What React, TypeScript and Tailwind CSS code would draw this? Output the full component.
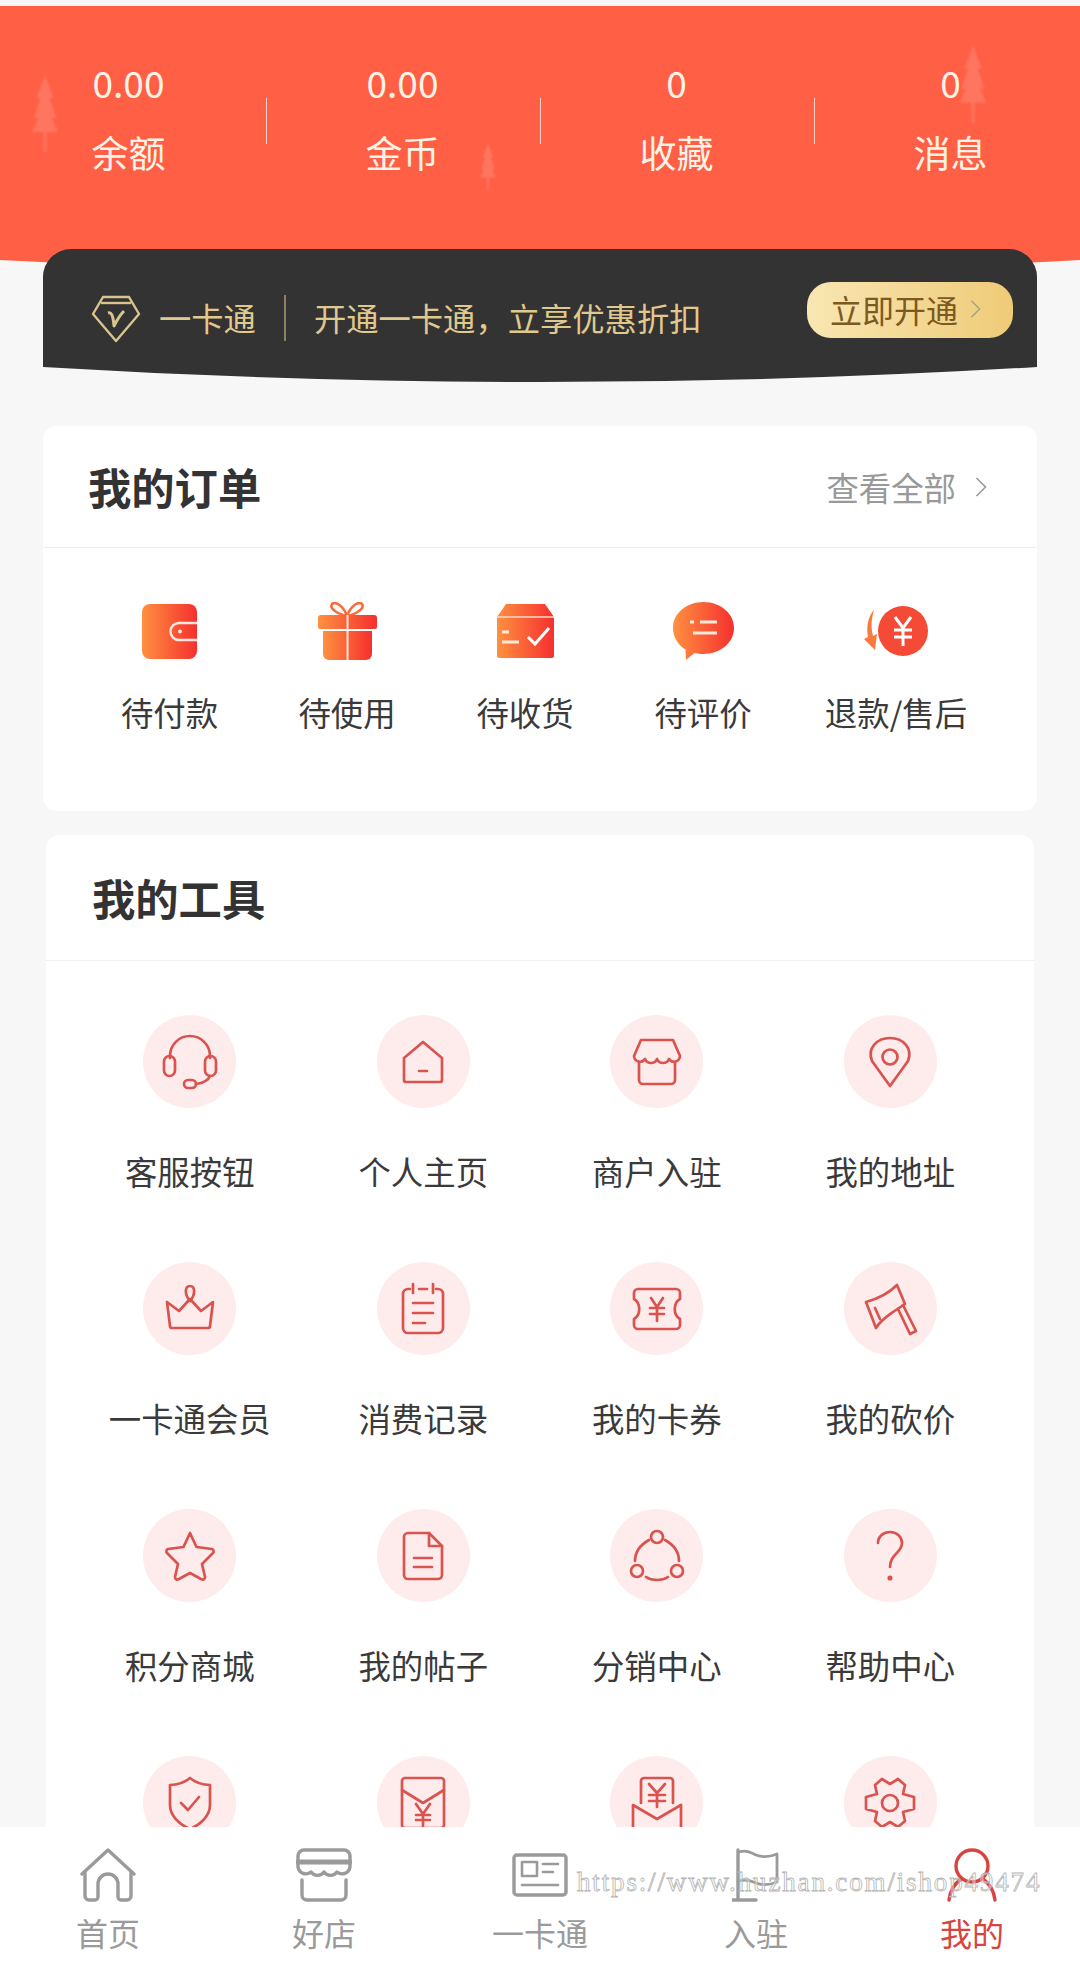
import type { ReactNode } from "react"

const cjk = "font-['Noto_Sans_CJK_SC','Noto_Sans',sans-serif]"

const stats = [
  { value: "0.00", label: "余额" },
  { value: "0.00", label: "金币" },
  { value: "0", label: "收藏" },
  { value: "0", label: "消息" },
]

function Grad({ id }: { id: string }) {
  return (
    <defs>
      <linearGradient id={id} x1="0" y1="0" x2="1" y2="0">
        <stop offset="0" stopColor="#ff9040" />
        <stop offset="1" stopColor="#f5302f" />
      </linearGradient>
    </defs>
  )
}

function Tree({ className }: { className: string }) {
  return (
    <svg viewBox="0 0 34 100" className={className} fill="#fff" fillOpacity="0.14">
      <path d="M17 0 L28 30 H23 L32 56 H26 L34 74 H19 V100 H15 V74 H0 L8 56 H2 L11 30 H6 Z" />
    </svg>
  )
}

const orders = [
  {
    label: "待付款",
    icon: (
      <svg width="55" height="55" viewBox="0 0 55 55">
        <Grad id="o1" />
        <rect width="55" height="55" rx="8" fill="url(#o1)" />
        <path d="M55 19 H37 a8.5 8.5 0 0 0 0 17 H55" fill="none" stroke="#ffe9dc" strokeWidth="2.5" />
        <circle cx="38" cy="27.5" r="2" fill="#ffe9dc" />
      </svg>
    ),
  },
  {
    label: "待使用",
    icon: (
      <svg width="59" height="58" viewBox="0 0 59 58">
        <Grad id="o2" />
        <path d="M29 14 C25 3 17 -1 14 2 C11 6 19 12 29 14 C39 12 47 6 44 2 C41 -1 33 3 29 14 Z" fill="none" stroke="#fa6b3a" strokeWidth="2.5" />
        <path d="M3 13 H56 a3 3 0 0 1 3 3 V25 a2 2 0 0 1-2 2 H2 a2 2 0 0 1-2-2 V16 a3 3 0 0 1 3-3 Z" fill="url(#o2)" />
        <path d="M5 29 H54 V52 a6 6 0 0 1-6 6 H11 a6 6 0 0 1-6-6 Z" fill="url(#o2)" />
        <path d="M29.5 13 V58" stroke="#ffe9dc" strokeWidth="2" />
      </svg>
    ),
  },
  {
    label: "待收货",
    icon: (
      <svg width="57" height="54" viewBox="0 0 57 54">
        <Grad id="o3" />
        <path d="M9 0 H48 L57 13 V52 a2 2 0 0 1-2 2 H2 a2 2 0 0 1-2-2 V13 Z" fill="url(#o3)" />
        <path d="M0 13 H57" stroke="#ffd9c8" strokeWidth="1.5" />
        <path d="M5 28 H12 M5 38 H22" stroke="#ffe9dc" strokeWidth="3" fill="none" />
        <path d="M31 33 L38 40 L52 24" stroke="#fff" strokeWidth="3" fill="none" />
      </svg>
    ),
  },
  {
    label: "待评价",
    icon: (
      <svg width="61" height="58" viewBox="0 0 61 58">
        <Grad id="o4" />
        <path d="M30.5 0 C47 0 61 11 61 26 C61 41 47 52 30.5 52 C27 52 24 51.5 21.5 51 L13 58 L12.5 47.5 C5 43 0 35 0 26 C0 11 14 0 30.5 0 Z" fill="url(#o4)" />
        <path d="M17 20 H21 M27 20 H44 M20 31 H44" stroke="#ffe9dc" strokeWidth="3" fill="none" />
      </svg>
    ),
  },
  {
    label: "退款/售后",
    icon: (
      <svg width="64" height="50" viewBox="0 0 64 50">
        <circle cx="39" cy="25" r="25" fill="#f44a36" />
        <path d="M31 11 L39 22 L47 11 M39 22 V40 M30 24 H48 M30 31 H48" stroke="#fff" strokeWidth="3" fill="none" />
        <path d="M10 4 C7 14 7 22 9 30 L13 28 L11 44 L0 33 L4 31 C2 22 4 10 10 4 Z" fill="#fa7a3c" />
      </svg>
    ),
  },
]

// stroke icons of the tools grid, all on a 56 box
const line = { fill: "none", stroke: "#d9534f", strokeWidth: 2.7, strokeLinecap: "round", strokeLinejoin: "round" } as const

function Line({ children }: { children: ReactNode }) {
  return (
    <svg width="56" height="56" viewBox="0 0 56 56" {...line}>
      {children}
    </svg>
  )
}

// the last row sits under the tab bar, so only its icons ever show
const tools: { label?: string; icon: ReactNode }[] = [
  {
    label: "客服按钮",
    icon: (
      <Line>
        <path d="M8 24 V22 a20 20 0 0 1 40 0 V24" />
        <rect x="2" y="22" width="11" height="20" rx="5.5" />
        <rect x="43" y="22" width="11" height="20" rx="5.5" />
        <path d="M48 42 C46 47 41 49 34 50" />
        <rect x="22" y="46" width="12" height="8" rx="4" />
      </Line>
    ),
  },
  {
    label: "个人主页",
    icon: (
      <Line>
        <path d="M28 8 L47 24 V46 a2 2 0 0 1-2 2 H11 a2 2 0 0 1-2-2 V24 Z" />
        <path d="M24 37 H32" />
      </Line>
    ),
  },
  {
    label: "商户入驻",
    icon: (
      <Line>
        <path d="M12 6 H44 L51 22 a6 6 0 0 1-11 3 a6.5 6.5 0 0 1-12 0 a6.5 6.5 0 0 1-12 0 a6 6 0 0 1-11-3 Z" />
        <path d="M10 28 V46 a4 4 0 0 0 4 4 H42 a4 4 0 0 0 4-4 V28" />
      </Line>
    ),
  },
  {
    label: "我的地址",
    icon: (
      <Line>
        <path d="M28 52 L10 27 C5 14 15 4 28 4 C41 4 51 14 46 27 Z" />
        <circle cx="28" cy="23" r="7.5" />
      </Line>
    ),
  },
  {
    label: "一卡通会员",
    icon: (
      <Line>
        <path d="M28 20 C22 13 23 5 28 5 C33 5 34 13 28 20 Z" />
        <path d="M10 47 H46 a2 2 0 0 0 2-2 L51 21 L39 30 L28 18 L17 30 L5 21 L8 45 a2 2 0 0 0 2 2 Z" />
      </Line>
    ),
  },
  {
    label: "消费记录",
    icon: (
      <Line>
        <path d="M15 8 H13 a5 5 0 0 0-5 5 V47 a5 5 0 0 0 5 5 H43 a5 5 0 0 0 5-5 V13 a5 5 0 0 0-5-5 H41" />
        <path d="M24 8 H32 M18 3 V12 M38 3 V12 M18 22 H38 M18 32 H38 M18 42 H30" />
      </Line>
    ),
  },
  {
    label: "我的卡券",
    icon: (
      <Line>
        <path d="M9 8 H47 a4 4 0 0 1 4 4 V18 C44 22 44 34 51 38 V44 a4 4 0 0 1-4 4 H9 a4 4 0 0 1-4-4 V38 C12 34 12 22 5 18 V12 a4 4 0 0 1 4-4 Z" />
        <path d="M22 17 L28 26 L34 17 M28 26 V40 M21 27 H35 M21 33 H35" />
      </Line>
    ),
  },
  {
    label: "我的砍价",
    icon: (
      <Line>
        <path d="M35 4 C27 12 15 18 4 21 L14 47 C18 40 24 36 31 31 L43 23 Z" />
        <path d="M36 28 L48 53 L54 50 L41 24" />
        <path d="M13 27 L18 38" />
      </Line>
    ),
  },
  {
    label: "积分商城",
    icon: (
      <Line>
        <path d="M28 5 L34.5 19 L50 21 C52 22 52 24 51 25 L40 36 L43 49 C43 52 41 52 39 51 L28 45 L17 51 C15 52 13 52 13 49 L16 36 L5 25 C4 24 4 22 6 21 L21.5 19 Z" />
      </Line>
    ),
  },
  {
    label: "我的帖子",
    icon: (
      <Line>
        <path d="M34 5 H13 a4 4 0 0 0-4 4 V47 a4 4 0 0 0 4 4 H43 a4 4 0 0 0 4-4 V18 Z" />
        <path d="M34 5 V18 H47 M19 30 H37 M19 39 H37" />
      </Line>
    ),
  },
  {
    label: "分销中心",
    icon: (
      <Line>
        <circle cx="28" cy="9" r="6" />
        <circle cx="8" cy="43" r="6" />
        <circle cx="48" cy="43" r="6" />
        <path d="M20 12 C11 17 6 25 6 33 M36 12 C45 17 50 25 50 33 M17 49 C23 53 33 53 39 49" />
      </Line>
    ),
  },
  {
    label: "帮助中心",
    icon: (
      <Line>
        <path d="M16 15 C16 8 22 4 28 4 C35 4 40 9 40 15 C40 25 28 26 28 39" />
        <circle cx="28" cy="50" r="1.2" />
      </Line>
    ),
  },
  {
    icon: (
      <Line>
        <path d="M28 3 C34 8 41 10 48 10 V30 C48 41 38 50 28 54 C18 50 8 41 8 30 V10 C15 10 22 8 28 3 Z" />
        <path d="M19 28 L26 35 L37 22" />
      </Line>
    ),
  },
  {
    icon: (
      <Line>
        <rect x="7" y="3" width="42" height="50" rx="3" />
        <path d="M7 15 L28 28 L49 15 M21 29 L28 39 L35 29 M28 39 V51 M21 40 H35 M21 45 H35" />
      </Line>
    ),
  },
  {
    icon: (
      <Line>
        <path d="M12 28 V6 a3 3 0 0 1 3-3 H41 a3 3 0 0 1 3 3 V28" />
        <path d="M20 9 L28 18 L36 9 M28 18 V32 M20 20 H36 M20 26 H36" />
        <path d="M4 30 L28 44 L52 30 V54 H4 Z" />
      </Line>
    ),
  },
  {
    icon: (
      <Line>
        <path d="M20 4 L28 9 L36 4 L43 10 L41 19 L52 22 V34 L41 37 L43 46 L36 52 L28 47 L20 52 L13 46 L15 37 L4 34 V22 L15 19 L13 10 Z" />
        <circle cx="28" cy="28" r="8" />
      </Line>
    ),
  },
]

const gray = { fill: "none", stroke: "#9a9a9a", strokeWidth: 3.4, strokeLinejoin: "round", strokeLinecap: "round" } as const

const tabs: { label: string; active?: boolean; icon: ReactNode }[] = [
  {
    label: "首页",
    icon: (
      <svg width="56" height="54" viewBox="0 0 56 54" {...gray}>
        <path d="M2 26 L28 2 L54 26" />
        <path d="M5 24 V48 a4 4 0 0 0 4 4 H15 a3 3 0 0 0 3-3 V36 a10 10 0 0 1 20 0 V49 a3 3 0 0 0 3 3 H47 a4 4 0 0 0 4-4 V24" />
      </svg>
    ),
  },
  {
    label: "好店",
    icon: (
      <svg width="56" height="54" viewBox="0 0 56 54" {...gray}>
        <path d="M8 2 H48 a6 6 0 0 1 6 6 V19 a8 8 0 0 1-13 5 a8 8 0 0 1-13 0 a8 8 0 0 1-13 0 a8 8 0 0 1-13-5 V8 a6 6 0 0 1 6-6 Z" />
        <path d="M2 14 H54" strokeWidth="5" />
        <path d="M6 32 V47 a5 5 0 0 0 5 5 H45 a5 5 0 0 0 5-5 V32" />
      </svg>
    ),
  },
  {
    label: "一卡通",
    icon: (
      <svg width="56" height="44" viewBox="0 0 56 44" {...gray}>
        <rect x="2" y="2" width="52" height="40" rx="3" />
        <rect x="10" y="9" width="15" height="14" strokeWidth="2.6" />
        <path d="M31 11 H46 M31 19 H41 M10 32 H46" strokeWidth="2.6" />
      </svg>
    ),
  },
  {
    label: "入驻",
    icon: (
      <svg width="48" height="54" viewBox="0 0 48 54" {...gray}>
        <path d="M6 2 V52 M0 52 H24" />
        <path d="M7 4 C14 2 18 4 24 7 C32 10 38 9 45 6 V34 C38 37 32 38 24 35 C18 32 13 31 7 33" strokeWidth="2.8" />
      </svg>
    ),
  },
  {
    label: "我的",
    active: true,
    icon: (
      <svg width="50" height="54" viewBox="0 0 50 54" fill="none" stroke="#d9443f" strokeWidth="3.4" strokeLinecap="round">
        <circle cx="25" cy="18" r="16" />
        <path d="M14 31 C7 36 3 44 2 52 M36 31 C43 36 47 44 48 52" />
      </svg>
    ),
  },
]

function Chevron({ className }: { className: string }) {
  return (
    <svg viewBox="0 0 12 20" className={className} fill="none" stroke="currentColor" strokeWidth="1.6">
      <path d="M1.5 1 L10.5 10 L1.5 19" />
    </svg>
  )
}

export default function App() {
  return (
    <div className={`relative flex h-[1969px] w-[1080px] flex-col overflow-hidden bg-[#f7f7f7] ${cjk}`}>
      <main className="min-h-0 flex-1 overflow-hidden pt-[6px]">
        {/* Red balance header */}
        <section className="relative">
          <div className="relative h-[254px] overflow-hidden bg-[#ff5f45] pt-[54px] text-[#fff3e8]">
            <Tree className="absolute top-[69px] left-[27px] h-[77px] w-[36px] blur-[1px]" />
            <Tree className="absolute top-[137px] left-[479px] h-[47px] w-[18px] blur-[1px]" />
            <Tree className="absolute top-[39px] left-[954px] h-[78px] w-[38px] blur-[1px]" />
            <div className="-ml-[7px] grid w-[1096px] grid-cols-[273px_1px_273px_1px_273px_1px_273px] text-center">
              {stats.map((stat, index) => (
                <div key={stat.label} className="contents">
                  <div className="pr-[2px]">
                    <div className="text-[37px] leading-[44px]">{stat.value}</div>
                    <div className="mt-[26px] text-[37px] leading-[44px]">{stat.label}</div>
                  </div>
                  {index < 3 && <div className="mt-[38px] h-[46px] bg-[#ffd5c8]" />}
                </div>
              ))}
            </div>
          </div>
          <svg width="1080" height="30" viewBox="0 0 1080 30" className="block">
            <path d="M0 0 H1080 Q540 30 0 0 Z" fill="#ff5f45" />
          </svg>
        </section>

        {/* Membership card banner */}
        <section className="relative mx-[43px] -mt-[41px]">
          <div className="flex h-[118px] items-start rounded-t-[28px] bg-[#333333] pr-[24px] pl-[48px] text-[#e0c98f]">
            <svg width="50" height="48" viewBox="0 0 50 48" className="mt-[46px]" fill="none" stroke="#d9c48d" strokeWidth="2.4" strokeLinejoin="round">
              <path d="M12 2 H38 L48 19 L25 46 L2 19 Z" />
              <path d="M10 8 H40" />
              <path d="M17 18 C20 17 22 19 23 31 C26 25 29 20 33 16" strokeWidth="3" />
            </svg>
            <span className="mt-[46px] ml-[18px] text-[32.3px] leading-[44px]">一卡通</span>
            <div className="mt-[46px] ml-[28px] h-[46px] w-[2px] bg-[#8d8063]" />
            <span className="mt-[46px] ml-[28px] flex-1 text-[32.3px] leading-[44px]">开通一卡通，立享优惠折扣</span>
            <div className="mt-[33px] flex h-[56px] w-[206px] items-center rounded-[24px] bg-gradient-to-r from-[#f9e6b2] to-[#eecb76] pb-[2px] pl-[23px] text-[#7a5a22]">
              <span className="text-[32px] leading-[44px]">立即开通</span>
              <Chevron className="ml-[12px] h-[20px] w-[11px] text-[#a9a08a]" />
            </div>
          </div>
          <svg width="994" height="16" viewBox="0 0 994 16" className="block">
            <path d="M0 0 H994 Q497 30 0 0 Z" fill="#333333" />
          </svg>
        </section>

        {/* Orders */}
        <section className="mx-[43px] mt-[43px] h-[385px] rounded-[14px] bg-white">
          <div className="flex h-[122px] items-center justify-between border-b border-[#efefef] pr-[50px] pl-[45px]">
            <h2 className="pb-[2px] text-[43.3px] leading-[56px] font-bold text-[#333333]">我的订单</h2>
            <div className="flex items-center text-[#999999]">
              <span className="text-[32.4px] leading-[44px]">查看全部</span>
              <Chevron className="ml-[19px] h-[20px] w-[12px]" />
            </div>
          </div>
          <div className="grid grid-cols-[177px_178px_178px_178px_208px] pt-[51px] pl-[38px]">
            {orders.map((item) => (
              <div key={item.label} className="flex flex-col items-center">
                <div className="flex h-[64px] items-center">{item.icon}</div>
                <span className="mt-[27px] text-[32.4px] leading-[44px] text-[#3a3a3a]">{item.label}</span>
              </div>
            ))}
          </div>
        </section>

        {/* Tools */}
        <section className="mx-[46px] mt-[24px] rounded-[14px] bg-white pb-[40px]">
          <div className="flex h-[126px] items-center border-b border-[#efefef] pl-[46px]">
            <h2 className="pb-[2px] text-[43.3px] leading-[56px] font-bold text-[#333333]">我的工具</h2>
          </div>
          <div className="mx-[27px] grid grid-cols-4 pt-[54px]">
            {tools.map((tool, index) => (
              <div key={index} className="flex h-[247px] flex-col items-center">
                <div className="flex h-[93px] w-[93px] items-center justify-center rounded-full bg-[#feecec]">{tool.icon}</div>
                {tool.label && <span className="mt-[41px] text-[32.4px] leading-[44px] text-[#3a3a3a]">{tool.label}</span>}
              </div>
            ))}
          </div>
        </section>
      </main>

      {/* Bottom tabs */}
      <nav className="grid h-[142px] shrink-0 grid-cols-5 bg-white pt-[21px]">
        {tabs.map((tab) => (
          <div key={tab.label} className="flex flex-col items-center">
            <div className="flex h-[54px] items-center">{tab.icon}</div>
            <span className={`mt-[8px] text-[32px] leading-[44px] ${tab.active ? "text-[#d9443f]" : "text-[#9a9a9a]"}`}>{tab.label}</span>
          </div>
        ))}
      </nav>

      {/* Site stamp over the tab bar */}
      <div className="absolute top-[1866px] left-[577px] font-['Liberation_Serif',serif] text-[27px] leading-[32px] tracking-[1.85px] whitespace-nowrap text-white/40 [-webkit-text-stroke:0.8px_#b4b4b4]">
        https://www.huzhan.com/ishop49474
      </div>
    </div>
  )
}
